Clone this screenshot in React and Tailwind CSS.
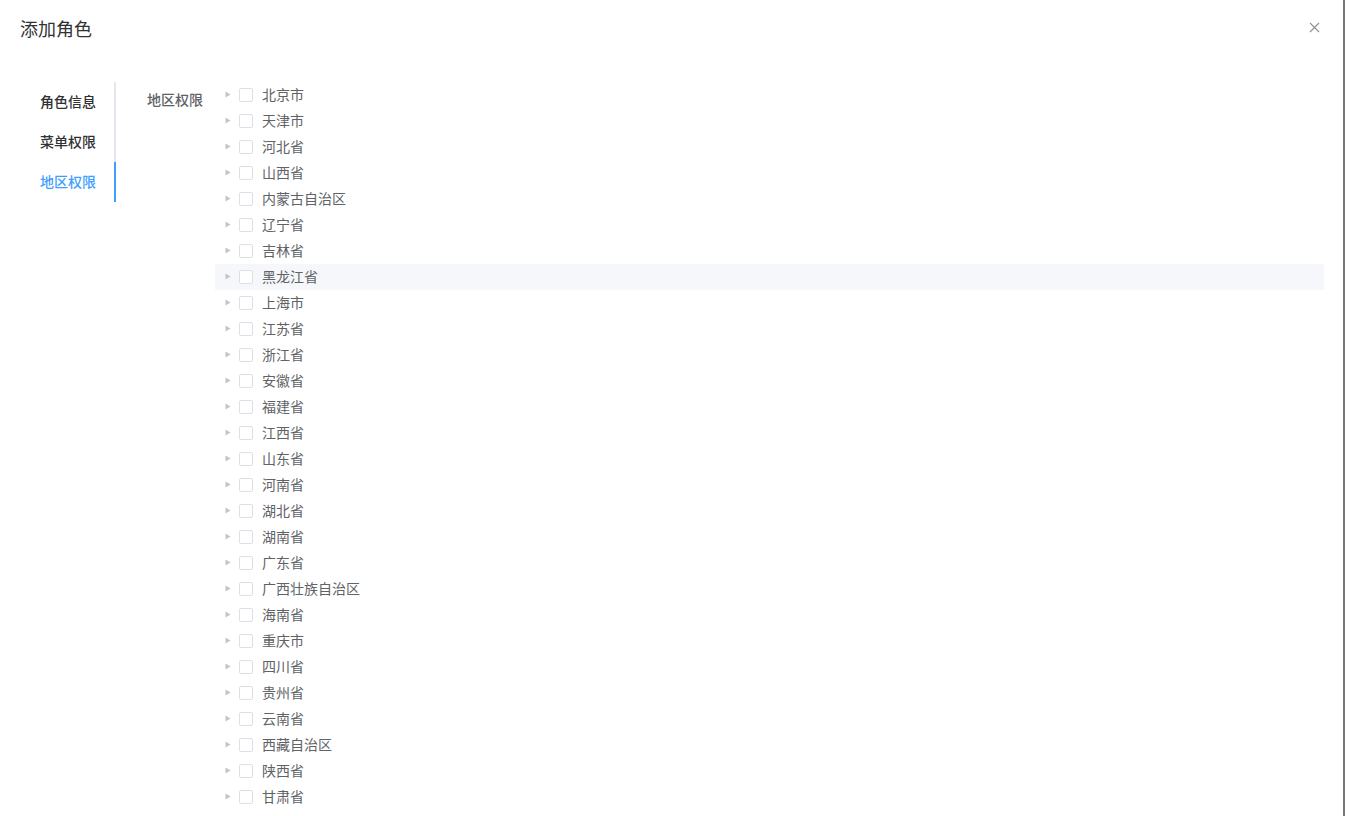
import React from 'react';

const regions = [
  '北京市', '天津市', '河北省', '山西省', '内蒙古自治区', '辽宁省', '吉林省', '黑龙江省', '上海市',
  '江苏省', '浙江省', '安徽省', '福建省', '江西省', '山东省', '河南省', '湖北省', '湖南省', '广东省',
  '广西壮族自治区', '海南省', '重庆市', '四川省', '贵州省', '云南省', '西藏自治区', '陕西省', '甘肃省',
];

const tabs = ['角色信息', '菜单权限', '地区权限'];

const font = { fontFamily: '"Helvetica Neue", "Liberation Sans", "Noto Sans CJK SC", sans-serif' };

const TreeNode = ({ label, hovered }) => (
  <div className={`flex items-center h-[26px] ${hovered ? 'bg-[#f5f7fa]' : ''}`}>
    <span className="w-[24px] h-full flex items-center justify-center">
      <svg width="6" height="7" viewBox="0 0 6 7" className="ml-[1px] -mt-[2px]">
        <path d="M0.5 0.5 L5.5 3.5 L0.5 6.5 Z" fill="#c0c4cc" />
      </svg>
    </span>
    <span className="w-[14px] h-[14px] border border-[#dcdfe6] rounded-[2px] bg-white mr-[9px]" />
    <span className="text-[14px] text-[#606266]">{label}</span>
  </div>
);

export default function App() {
  return (
    <div className="w-full h-[816px] bg-white border-r-2 border-[#777] overflow-hidden" style={font}>
      {/* Header */}
      <div className="flex items-center justify-between pt-[18px] pl-[20px] pr-[23px]">
        <span className="text-[18px] leading-[24px] text-[#303133]">添加角色</span>
        <svg width="11" height="11" viewBox="0 0 11 11" className="-mt-[6px]">
          <path d="M1 1 L10 10 M10 1 L1 10" stroke="#909399" strokeWidth="1.2" />
        </svg>
      </div>

      {/* Body */}
      <div className="flex pt-[40px] pl-[20px] pr-[19px]">
        {/* Left tabs */}
        <div className="flex flex-col self-start mr-[10px]">
          {tabs.map((t, i) => (
            <div
              key={t}
              className={`h-[40px] leading-[40px] pl-[20px] pr-[18px] text-[14px] font-medium border-r-2 ${
                i === 2 ? 'text-[#409eff] border-[#409eff]' : 'text-[#303133] border-[#e4e7ed]'
              }`}
            >
              {t}
            </div>
          ))}
        </div>

        {/* Form item */}
        <div className="flex flex-1">
          <div className="w-[89px] pr-[12px] text-right text-[14px] leading-[36px] font-medium text-[#606266] shrink-0">
            地区权限
          </div>
          <div className="flex-1 flex flex-col">
            {regions.map((r) => (
              <TreeNode key={r} label={r} hovered={r === '黑龙江省'} />
            ))}
          </div>
        </div>
      </div>
    </div>
  );
}
